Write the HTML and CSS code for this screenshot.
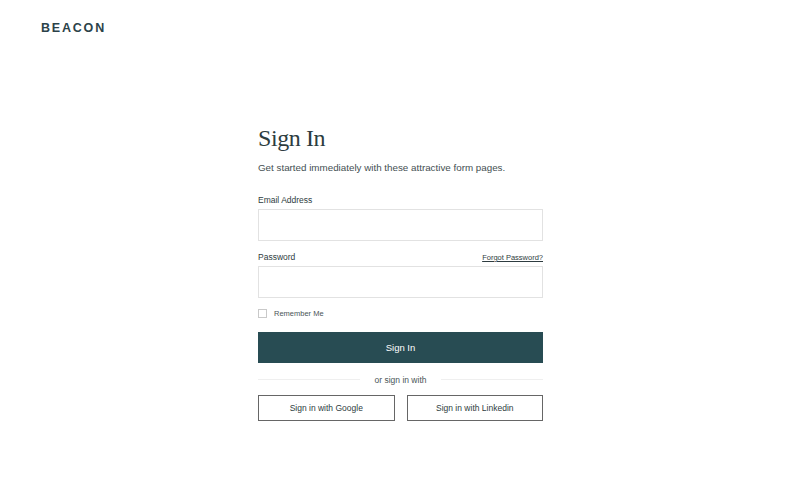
FILE: index.html
```html
<!DOCTYPE html>
<html>
<head>
<meta charset="utf-8">
<link rel="stylesheet" href="styles.css">
</head>
<body>
<header class="top">
  <div class="logo">BEACON</div>
</header>
<main class="wrap">
  <form class="form">
    <h1 class="title">Sign In</h1>
    <p class="sub">Get started immediately with these attractive form pages.</p>
    <div class="field">
      <div class="label-row"><label class="label">Email Address</label></div>
      <input class="input" type="text">
    </div>
    <div class="field">
      <div class="label-row"><label class="label">Password</label><a class="forgot" href="#">Forgot Password?</a></div>
      <input class="input" type="password">
    </div>
    <label class="remember"><span class="box"></span><span>Remember Me</span></label>
    <button class="primary" type="button">Sign In</button>
    <div class="divider"><span class="line"></span><span class="or">or sign in with</span><span class="line"></span></div>
    <div class="social">
      <button class="soc" type="button">Sign in with Google</button>
      <button class="soc" type="button">Sign in with Linkedin</button>
    </div>
  </form>
</main>
</body>
</html>
```
FILE: styles.css
```css
* { box-sizing: border-box; }
html, body { margin: 0; padding: 0; background: #fff; }
body { font-family: "Liberation Sans", Arial, sans-serif; color: #2e3f44; width: 800px; height: 500px; overflow: hidden; }
.top { padding: 21px 0 0 41px; height: 40px; }
.logo { font-size: 12.5px; font-weight: bold; letter-spacing: 1.8px; color: #2b4249; }
.wrap { display: flex; justify-content: center; padding-top: 83px; padding-left: 1px; }
.form { width: 285px; display: flex; flex-direction: column; }
.title { font-family: "Liberation Serif", "Times New Roman", serif; font-weight: normal; font-size: 24px; margin: 0; line-height: 30px; color: #2c3c40; letter-spacing: -0.4px; }
.sub { margin: 8px 0 0; font-size: 9.8px; color: #444f52; line-height: 14px; }
.field { margin-top: 20px; display: flex; flex-direction: column; }
.field + .field { margin-top: 11px; }
.label-row { display: flex; justify-content: space-between; align-items: baseline; height: 14px; margin-bottom: 0; }
.label { font-size: 8.5px; color: #2e3c40; }
.forgot { font-size: 7.5px; color: #2e3c40; text-decoration: underline; }
.input { height: 32px; border: 1px solid #e2e2e2; border-radius: 0; width: 100%; padding: 0 8px; outline: none; background: #fff; }
.remember { display: flex; align-items: center; gap: 7px; margin-top: 10px; font-size: 7.5px; color: #4a5558; height: 10px; }
.box { width: 9px; height: 9px; border: 1px solid #c9c9c9; display: inline-block; }
.primary { margin-top: 14px; height: 31px; background: #284c53; color: #fff; border: none; font-family: inherit; font-size: 9.5px; width: 100%; }
.divider { display: flex; align-items: center; margin-top: 11px; height: 11px; gap: 10px; }
.line { flex: 1; height: 1px; background: #efefef; }
.or { font-size: 8.5px; color: #4a5558; padding: 0 5px; }
.social { display: flex; gap: 12px; margin-top: 10px; }
.soc { flex: 1; height: 26px; background: #fff; border: 1.5px solid #666; font-family: inherit; font-size: 8.5px; color: #2e3c40; }
```
